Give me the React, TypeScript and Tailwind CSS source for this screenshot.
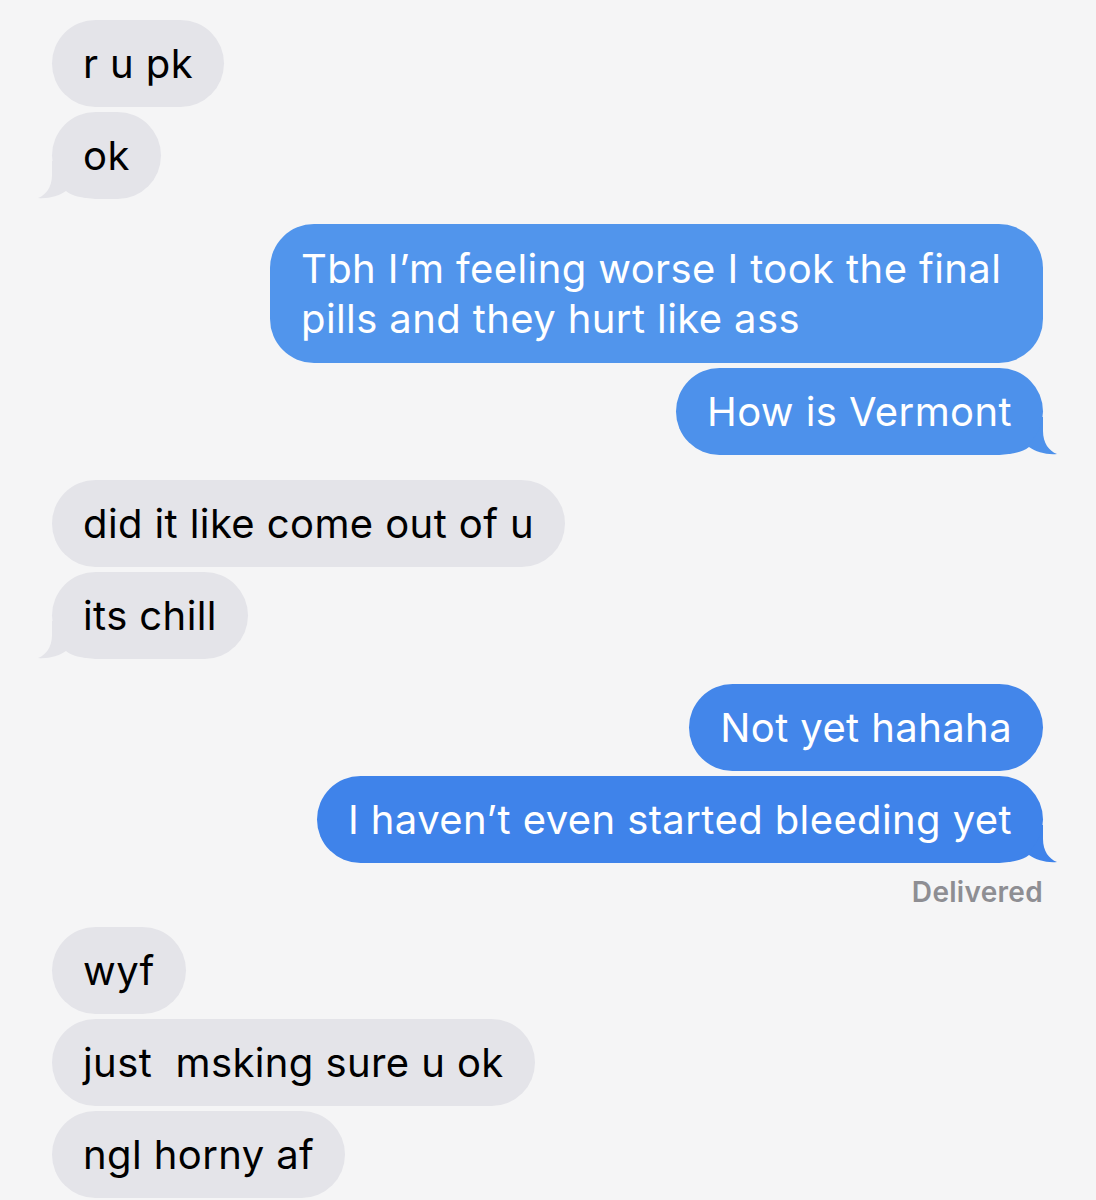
type Msg = { text: string; tail?: boolean; color?: string; tall?: boolean }

const font = { fontFamily: 'Inter, "Liberation Sans", sans-serif' }

function LeftTail() {
  return (
    <svg
      className="absolute bottom-0 -left-[14px]"
      width="48"
      height="38"
      viewBox="0 0 48 38"
      fill="#e4e4e9"
    >
      <path d="M14 0 L14 14 C14 26 8 34 0 37 C10 38 21 35 28 30 C33 34 40 36 48 37 L48 0 Z" />
    </svg>
  )
}

function RightTail({ color }: { color: string }) {
  return (
    <svg
      className="absolute bottom-0 -right-[14px]"
      width="48"
      height="38"
      viewBox="0 0 48 38"
      fill={color}
    >
      <path d="M34 0 L34 14 C34 26 40 34 48 37 C38 38 27 35 20 30 C15 34 8 36 0 37 L0 0 Z" />
    </svg>
  )
}

function Received({ text, tail }: Msg) {
  return (
    <div className="relative self-start">
      {tail && <LeftTail />}
      <div
        className="relative whitespace-pre-wrap rounded-[44px] bg-[#e4e4e9] px-[31px] py-[18.5px] text-[40px] leading-[50px] tracking-[0.4px] text-black"
        style={font}
      >
        {text}
      </div>
    </div>
  )
}

function Sent({ text, tail, tall, color = '#4a8fea' }: Msg) {
  return (
    <div className="relative max-w-[773px] self-end">
      {tail && <RightTail color={color} />}
      <div
        className={
          tall
            ? 'relative rounded-[44px] px-[31px] py-[19.5px] text-[40px] leading-[50px] tracking-[0.4px] text-white'
            : 'relative rounded-[44px] px-[31px] py-[18.5px] text-[40px] leading-[50px] tracking-[0.4px] text-white'
        }
        style={{ ...font, backgroundColor: color }}
      >
        {text}
      </div>
    </div>
  )
}

export default function App() {
  return (
    <div className="min-h-[1200px] w-[1096px] overflow-hidden bg-[#f5f5f6] pl-[52px] pr-[53px] pt-[20px]">
      <div className="flex flex-col">
        <div className="flex flex-col gap-[5px]">
          <Received text="r u pk" />
          <Received text="ok" tail />
        </div>

        <div className="mt-[25px] flex flex-col gap-[5px]">
          <Sent text="Tbh I’m feeling worse I took the final pills and they hurt like ass" color="#5195ec" tall />
          <Sent text="How is Vermont" tail color="#4d91eb" />
        </div>

        <div className="mt-[25px] flex flex-col gap-[5px]">
          <Received text="did it like come out of u" />
          <Received text="its chill" tail />
        </div>

        <div className="mt-[25px] flex flex-col gap-[5px]">
          <Sent text="Not yet hahaha" color="#4386ea" />
          <Sent text="I haven’t even started bleeding yet" tail color="#3f83ea" />
          <div
            className="mt-[6px] self-end text-[28px] font-semibold leading-[36px] tracking-[0.3px] text-[#8e8e93]"
            style={font}
          >
            Delivered
          </div>
        </div>

        <div className="mt-[17px] flex flex-col gap-[5px]">
          <Received text="wyf" />
          <Received text="just  msking sure u ok" />
          <Received text="ngl horny af" />
        </div>
      </div>
    </div>
  )
}
